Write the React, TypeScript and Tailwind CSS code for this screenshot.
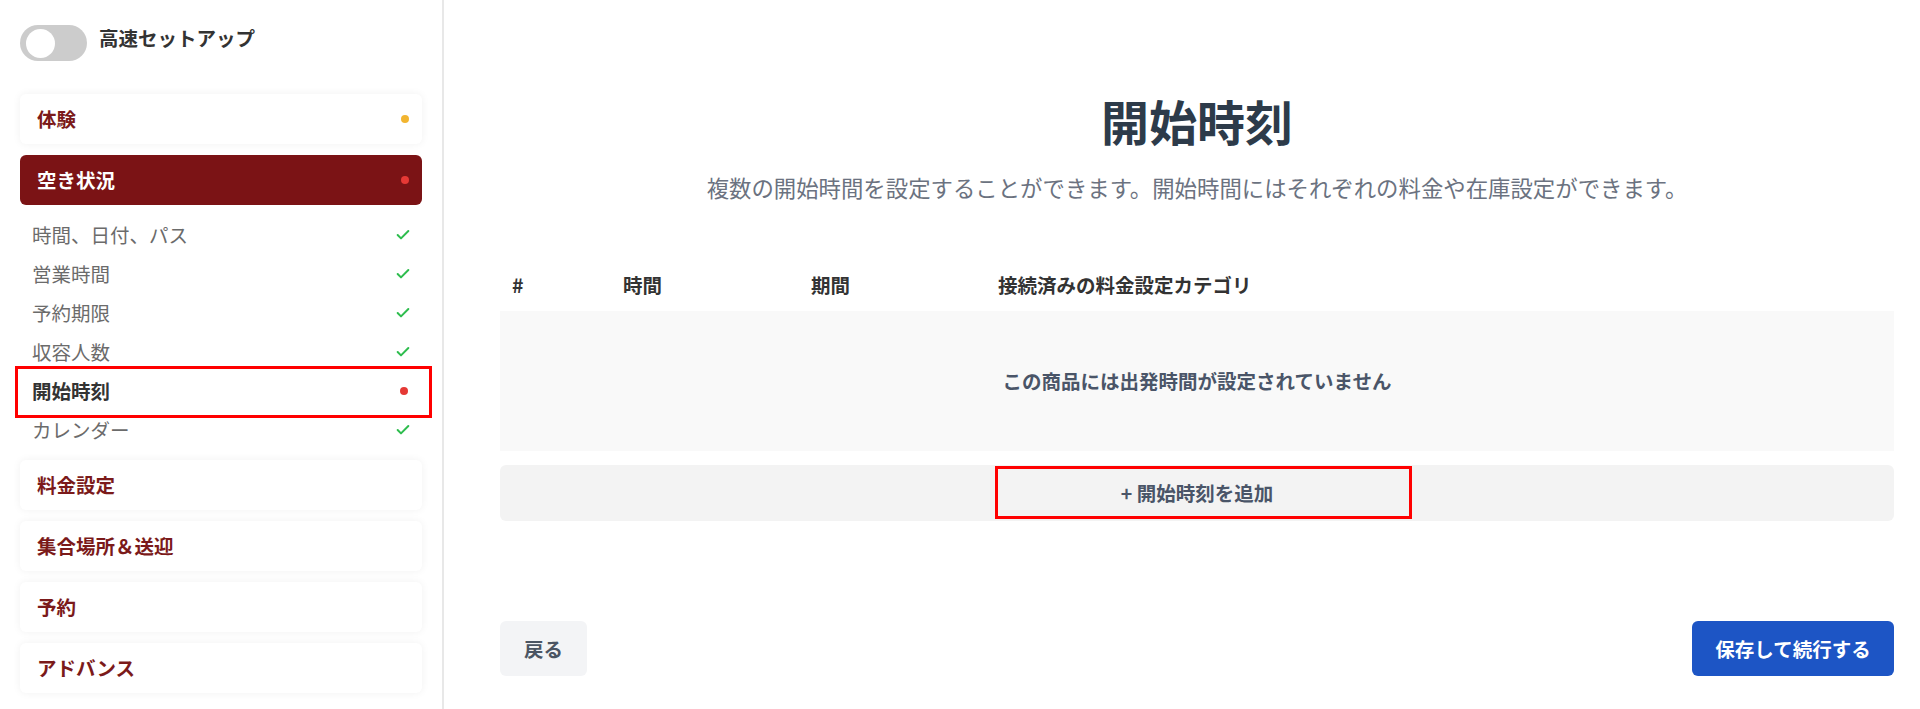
import { Check } from "lucide-react";

const font = {
  fontFamily: '"Noto Sans CJK JP", "Noto Sans", sans-serif',
};

const subItems = [
  { label: "時間、日付、パス", done: true },
  { label: "営業時間", done: true },
  { label: "予約期限", done: true },
  { label: "収容人数", done: true },
  { label: "開始時刻", done: false, current: true },
  { label: "カレンダー", done: true },
];

function SectionCard({ label, dot }: { label: string; dot?: string }) {
  return (
    <div className="flex h-[50px] items-center justify-between rounded-md bg-white pl-[17px] pr-[13px] shadow-[0_0_8px_rgba(0,0,0,0.06)]">
      <span className="text-[19.5px] font-bold text-[#7b1a1a]">{label}</span>
      {dot && <span className={`h-[8px] w-[8px] rounded-full ${dot}`} />}
    </div>
  );
}

function Sidebar() {
  return (
    <aside className="flex w-[444px] shrink-0 flex-col border-r-2 border-[#e8e8e8] px-5 pt-[25px]">
      <div className="flex items-start gap-3">
        <div className="flex h-[36px] w-[67px] items-center rounded-full bg-[#cccccc] px-[6px]">
          <div className="h-[29px] w-[29px] rounded-full bg-white" />
        </div>
        <span className="mt-[-2px] text-[19.5px] font-semibold text-[#333333]">
          高速セットアップ
        </span>
      </div>

      <div className="mt-[33px] flex flex-col gap-[11px]">
        <SectionCard label="体験" dot="bg-[#f2b530]" />

        <div className="flex h-[50px] items-center justify-between rounded-md bg-[#7b1315] pl-[17px] pr-[13px]">
          <span className="text-[19.5px] font-bold text-white">空き状況</span>
          <span className="h-[8px] w-[8px] rounded-full bg-[#e53935]" />
        </div>

        <ul className="-mt-[1px] flex flex-col">
          {subItems.map((item) => (
            <li
              key={item.label}
              className="relative flex h-[39px] items-center justify-between pl-3 pr-[11px]"
            >
              <span
                className={
                  item.current
                    ? "text-[19.5px] font-bold text-[#333333]"
                    : "text-[19.5px] text-[#6b6b6b]"
                }
              >
                {item.label}
              </span>
              {item.done ? (
                <Check className="h-[16px] w-[16px] text-[#2ebd4e]" strokeWidth={3} />
              ) : (
                <span className="mr-[3px] h-[8px] w-[8px] rounded-full bg-[#e53935]" />
              )}
              {item.current && (
                <span className="absolute -top-[5px] -bottom-[8px] -left-[5px] -right-[10px] border-[3px] border-[#ff0000]" />
              )}
            </li>
          ))}
        </ul>

        <SectionCard label="料金設定" />
        <SectionCard label="集合場所＆送迎" />
        <SectionCard label="予約" />
        <SectionCard label="アドバンス" />
      </div>
    </aside>
  );
}

function StartTimes() {
  return (
    <main className="flex flex-1 flex-col pl-[56px] pr-[26px] pt-[91px]">
      <h1 className="text-center text-[48px] font-bold leading-[58px] text-[#2d3b4a]">
        開始時刻
      </h1>
      <p className="mt-[23px] text-center text-[22.4px] leading-[30px] text-[#6b7280]">
        複数の開始時間を設定することができます。開始時間にはそれぞれの料金や在庫設定ができます。
      </p>

      <div className="mt-[63px] grid h-[40px] grid-cols-[111px_188px_187px_1fr] items-center pl-3 text-[19.5px] font-semibold text-[#333333]">
        <span>#</span>
        <span>時間</span>
        <span>期間</span>
        <span>接続済みの料金設定カテゴリ</span>
      </div>

      <div className="mt-[6px] flex h-[140px] items-center justify-center bg-[#f9f9f9]">
        <span className="text-[19.5px] font-bold text-[#4a5568]">
          この商品には出発時間が設定されていません
        </span>
      </div>

      <div className="mt-[14px] flex h-[56px] items-center justify-center rounded-md bg-[#f3f3f3]">
        <span className="relative text-[19.5px] font-bold leading-[26px] text-[#4a5568]">
          + 開始時刻を追加
          <span className="absolute -top-[14px] -bottom-[13px] -left-[126px] -right-[139px] border-[3px] border-[#ff0000]" />
        </span>
      </div>

      <div className="mt-[100px] flex items-center justify-between">
        <button className="h-[55px] rounded-md bg-[#f3f4f6] px-[24px] text-[19.5px] font-bold text-[#4b5563]">
          戻る
        </button>
        <button className="h-[55px] w-[202px] rounded-md bg-[#1d55c5] text-[19.5px] font-bold text-white">
          保存して続行する
        </button>
      </div>
    </main>
  );
}

export default function App() {
  return (
    <div className="flex h-[709px] w-[1920px] overflow-hidden bg-white" style={font}>
      <Sidebar />
      <StartTimes />
    </div>
  );
}
